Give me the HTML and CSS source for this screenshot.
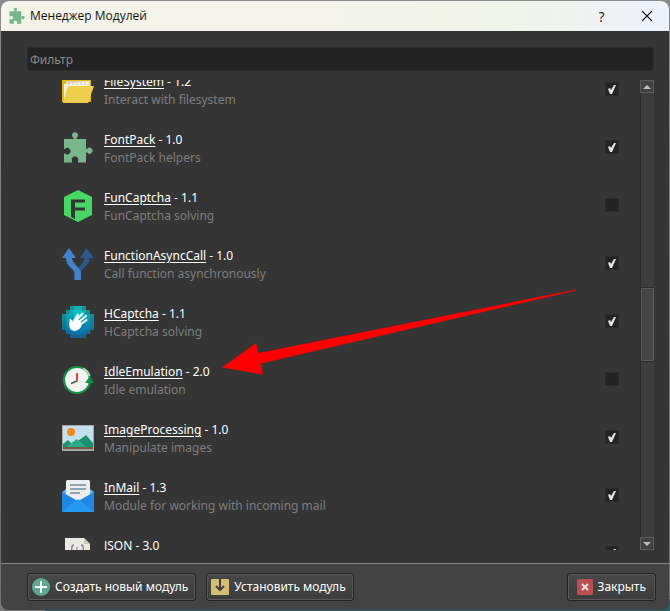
FILE: index.html
```html
<!DOCTYPE html>
<html lang="ru">
<head>
<meta charset="utf-8">
<title>Менеджер Модулей</title>
<link rel="stylesheet" href="styles.css">
</head>
<body>
<div class="window">
  <header class="titlebar">
    <svg class="app-icon" viewBox="1 1 30 30"><use href="#puzzle"/></svg>
    <h1 class="title">Менеджер Модулей</h1>
    <button class="caption-button" type="button" aria-label="Справка">?</button>
    <button class="caption-button" type="button" aria-label="Закрыть окно"><svg width="12" height="12" viewBox="0 0 12 12"><path d="M1 1L11 11M11 1L1 11" stroke="#1b1b1b" stroke-width="1.1"/></svg></button>
  </header>
  <main class="content">
    <input class="filter" type="text" placeholder="Фильтр" aria-label="Фильтр">
    <div class="viewport">
      <ul class="modules">
        <li class="module">
          <svg class="icon" viewBox="0 0 32 32"><path d="M0 3H12L14 6H29V28H0Z" fill="#eab413"/><path d="M4 7H28V24H4Z" fill="#d9d3c0"/><path d="M2 10L27 7V26H2Z" fill="#f6f0e1"/><path d="M7 9V11M11 9V11M15 8V11M19 8V11M23 8V11" stroke="#d2cab5"/><path d="M5 14Q6 12 8 12H32L26 29H1Z" fill="#eecf4b"/></svg>
          <div class="text"><p class="name"><a href="#filesystem">FileSystem</a> - 1.2</p><p class="desc">Interact with filesystem</p></div>
          <input class="check" type="checkbox" aria-label="FileSystem" checked>
        </li>
        <li class="module">
          <svg class="icon" viewBox="0 0 32 32"><g id="puzzle"><path d="M2 7H11.500V5.800A3 3 0 1 1 14.500 5.800V7H24V17H25A3 3 0 1 1 25 20.500H24V30.500H16V29A3.300 3.300 0 1 0 10 29V30.500H2V21.500H3A3.200 3.200 0 1 0 3 17H2Z" fill="#77b78a"/></g></svg>
          <div class="text"><p class="name"><a href="#fontpack">FontPack</a> - 1.0</p><p class="desc">FontPack helpers</p></div>
          <input class="check" type="checkbox" aria-label="FontPack" checked>
        </li>
        <li class="module">
          <svg class="icon" viewBox="0 0 32 32"><path d="M16 0L30 7V25L16 32L2 25V7Z" fill="#47d764"/><path d="M9 9.500H23V12.500H13V17.500H23V20.500H13V29L9 27Z" fill="#353535"/></svg>
          <div class="text"><p class="name"><a href="#funcaptcha">FunCaptcha</a> - 1.1</p><p class="desc">FunCaptcha solving</p></div>
          <input class="check" type="checkbox" aria-label="FunCaptcha">
        </li>
        <li class="module">
          <svg class="icon" viewBox="0 0 32 32"><path d="M24.500 0L32 10H28C28 18 19 19 19 26V32H16V20C19 16 22 15 22 10H18Z" fill="#29598a"/><path d="M7 0L14 10H10C10 16 19 19 19 26V32H12.500V26C12.500 20 4 19 4 10H0Z" fill="#4284cb"/></svg>
          <div class="text"><p class="name"><a href="#functionasynccall">FunctionAsyncCall</a> - 1.0</p><p class="desc">Call function asynchronously</p></div>
          <input class="check" type="checkbox" aria-label="FunctionAsyncCall" checked>
        </li>
        <li class="module">
          <svg class="icon" viewBox="0 0 32 32"><defs><linearGradient id="aqua" x1="0" y1="0" x2="0" y2="1"><stop offset="0" stop-color="#14b5ad"/><stop offset=".5" stop-color="#079bb4"/><stop offset="1" stop-color="#0b6eb2"/></linearGradient></defs><path d="M8 0H24V4H28V8H32V24H28V28H24V32H8V28H4V24H0V8H4V4H8Z" fill="url(#aqua)" opacity=".75"/><path d="M12 0H20V4H24V8H28V24H24V28H8V24H4V8H8V4H12Z" fill="url(#aqua)"/><path d="M12 4H20V8H24V12H12Z" fill="#04c5c1"/><path d="M8.500 20L8.500 14L10.500 17L16 8.500M11 18L20.500 7.500M13 19L24 10M15 21L24.500 14" fill="none" stroke="#fff" stroke-width="2" stroke-linecap="round" stroke-linejoin="round"/><path d="M7.500 16L12 16L16 13L20 17L19 21Q16 25 12 25Q7.500 24 7.500 20Z" fill="#fff"/></svg>
          <div class="text"><p class="name"><a href="#hcaptcha">HCaptcha</a> - 1.1</p><p class="desc">HCaptcha solving</p></div>
          <input class="check" type="checkbox" aria-label="HCaptcha" checked>
        </li>
        <li class="module">
          <svg class="icon" viewBox="0 0 32 32"><circle cx="15" cy="16" r="13" fill="#f3f3f1" stroke="#129347" stroke-width="2.200"/><path d="M21 4.500A13 13 0 0 1 27.500 12" fill="none" stroke="#a9d7b9" stroke-width="2.200"/><path d="M23 19L27.500 12.500L32 19Z" fill="#129347"/><path d="M15 9V17" stroke="#dc4a2c" stroke-width="2"/><path d="M9 19.500L15 17" stroke="#555" stroke-width="1.600"/></svg>
          <div class="text"><p class="name"><a href="#idleemulation">IdleEmulation</a> - 2.0</p><p class="desc">Idle emulation</p></div>
          <input class="check" type="checkbox" aria-label="IdleEmulation">
        </li>
        <li class="module">
          <svg class="icon" viewBox="0 0 32 32"><path d="M0 3H32V29H0Z" fill="#a5a5a3"/><path d="M1 4H31V26H1Z" fill="#c3e0ec"/><circle cx="9" cy="10" r="4" fill="#f28b1c"/><path d="M1 25V22L6 18L10 22L16 19L24 13L31 21V25Z" fill="#1c9170"/><path d="M4 25L15 17L24 25Z" fill="#28ae87"/><path d="M1 25H31V27H1Z" fill="#795646"/></svg>
          <div class="text"><p class="name"><a href="#imageprocessing">ImageProcessing</a> - 1.0</p><p class="desc">Manipulate images</p></div>
          <input class="check" type="checkbox" aria-label="ImageProcessing" checked>
        </li>
        <li class="module">
          <svg class="icon" viewBox="0 0 32 32"><path d="M0 12L4 9H28L32 12V32H0Z" fill="#64b0ef"/><path d="M4 1.500Q4 0 5.500 0H26.500Q28 0 28 1.500V26H4Z" fill="#eceff1"/><path d="M8 5H24M8 9H24M8 13H18" stroke="#8fa4af" stroke-width="2"/><path d="M0 12L14 20H18L32 12V32H0Z" fill="#1f88e3"/><path d="M0 32L14 20Q16 19 18 20L32 32Z" fill="#2499f3"/></svg>
          <div class="text"><p class="name"><a href="#inmail">InMail</a> - 1.3</p><p class="desc">Module for working with incoming mail</p></div>
          <input class="check" type="checkbox" aria-label="InMail" checked>
        </li>
        <li class="module">
          <svg class="icon" viewBox="0 0 32 32"><path d="M3 0H22L28 6V32H3Z" fill="#e9e9e0"/><path d="M22 0L28 6H22Z" fill="#c9c8bd"/><path d="M12 7Q10 7 10 9Q10 11 9 11Q10 11 10 13M19 7Q21 7 21 9Q21 11 22 11Q21 11 21 13M15 9.500V11.500" fill="none" stroke="#9777a8" stroke-width="1.500"/></svg>
          <div class="text"><p class="name">JSON - 3.0</p><p class="desc">JSON helpers</p></div>
          <input class="check" type="checkbox" aria-label="JSON" checked>
        </li>
      </ul>
      <div class="scrollbar">
        <button class="step" type="button" aria-label="Вверх"><svg width="8" height="4" viewBox="0 0 8 4"><path d="M0 4L4 0L8 4Z" fill="#bdbdbd"/></svg></button>
        <div class="track"><div class="thumb"></div></div>
        <button class="step" type="button" aria-label="Вниз"><svg width="8" height="4" viewBox="0 0 8 4"><path d="M0 0H8L4 4Z" fill="#bdbdbd"/></svg></button>
      </div>
    </div>
  </main>
  <footer class="footer">
    <button class="button" type="button"><svg width="18" height="18" viewBox="0 0 18 18"><circle cx="9" cy="9" r="9" fill="#5fa890"/><path d="M9 3V15M3 9H15" stroke="#fff" stroke-width="2"/></svg>Создать новый модуль</button>
    <button class="button" type="button"><svg width="18" height="18" viewBox="0 0 18 18"><path d="M1 1H17Q18 1 18 2V16Q18 17 17 17H1Q0 17 0 16V2Q0 1 1 1Z" fill="#d4be72"/><path d="M9 1V12M5 8L9 12L13 8" fill="none" stroke="#404040" stroke-width="2"/></svg>Установить модуль</button>
    <button class="button button-close" type="button"><svg width="16" height="16" viewBox="0 0 16 16"><rect width="16" height="16" rx="1" fill="#b94f50"/><path d="M5 5L11 11M11 5L5 11" stroke="#f4dede" stroke-width="2"/></svg>Закрыть</button>
  </footer>
  <svg class="arrow" width="356" height="88" viewBox="0 0 356 88"><path d="M0 78.500L34 54L36.500 64L354 .500V1.500L39 74.500L41 85.500Z" fill="#f00"/></svg>
</div>
</body>
</html>
```
FILE: styles.css
```css
* {
  box-sizing: border-box;
}

body {
  margin: 0;
  height: 100vh;
  padding: 1px;
  background: linear-gradient(90deg, #777 45px, #286068 45px) bottom / 100% 12px no-repeat, linear-gradient(#8b8b8b, #6d6d6d);
  font-family: "Noto Sans", sans-serif;
  font-size: 12px;
  line-height: 18px;
}

.window {
  position: relative;
  display: flex;
  flex-direction: column;
  height: 100%;
  overflow: hidden;
  border-radius: 8px;
  background: #353535;
  color: #fff;
}

.titlebar {
  display: flex;
  flex: none;
  align-items: center;
  height: 30px;
  padding-left: 8px;
  background: linear-gradient(90deg, #f4f4ea 50%, #f1f4e8 75%, #edf1fb);
  color: #111;
  font-family: "Open Sans", sans-serif;
}

.app-icon {
  width: 16px;
  height: 16px;
}

.title {
  flex: 1;
  margin: 0 0 0 5px;
  font-size: 12px;
  font-weight: 400;
}

.caption-button {
  display: flex;
  align-items: center;
  justify-content: center;
  width: 45px;
  height: 30px;
  padding: 0;
  border: 0;
  background: none;
  color: #111;
  font: 14px "Open Sans", sans-serif;
}

.content {
  display: flex;
  flex: 1;
  flex-direction: column;
  gap: 9px;
  min-height: 0;
  padding: 16px 15px 13px 26px;
}

.filter {
  flex: none;
  height: 24px;
  padding: 0 2px;
  border: 1px solid #2b2b2b;
  border-radius: 3px;
  background: #232323;
  color: #fff;
  font: inherit;
}

.filter::placeholder {
  color: #8a8a8a;
  opacity: 1;
}

.viewport {
  display: flex;
  flex: 1;
  min-height: 0;
  overflow: hidden;
}

.modules {
  flex: 1;
  margin: -18px 0 0;
  padding: 0 21px 0 35px;
  list-style: none;
}

.module {
  display: flex;
  align-items: center;
  height: 58px;
}

.icon {
  width: 32px;
  height: 32px;
  margin-bottom: 2px;
}

.text {
  flex: 1;
  margin-left: 10px;
}

.text p {
  margin: 0;
}

.name a {
  color: inherit;
  text-underline-offset: 2px;
}

.desc {
  color: #7d7d7d;
}

.check {
  appearance: none;
  width: 14px;
  height: 14px;
  margin: 0 0 4px;
  border: 1px solid #2b2b2b;
  background: #232323;
}

.check:checked::before {
  content: "";
  display: block;
  width: 12px;
  height: 12px;
  background: #e4e4e4;
  clip-path: polygon(2px 6px, 4px 5px, 5px 7px, 8px 2px, 10px 2px, 6px 11px, 4px 11px);
}

.scrollbar {
  display: flex;
  flex-direction: column;
  width: 14px;
}

.step {
  display: flex;
  flex: none;
  align-items: center;
  justify-content: center;
  height: 13px;
  padding: 0;
  border: 1px solid #5c5c5c;
  background: #414141;
}

.track {
  flex: 1;
  padding-top: 195px;
  border-left: 1px solid #2a2a2a;
  background: #3d3d3d;
}

.thumb {
  height: 73px;
  border: 1px solid #5c5c5c;
  outline: 1px solid #2a2a2a;
  background: linear-gradient(90deg, #424242, #484848);
}

.footer {
  display: flex;
  flex: none;
  gap: 10px;
  padding: 9px 13px 9px 26px;
  border-top: 1px solid #858585;
  background: #434343;
}

.button {
  display: flex;
  align-items: center;
  gap: 5px;
  height: 28px;
  padding: 0 7px 0 4px;
  border: 1px solid #222;
  border-radius: 3px;
  background: linear-gradient(#484848, #3c3c3c);
  box-shadow: inset 0 0 0 1px #5a5a5a;
  color: #fff;
  font: inherit;
}

.button-close {
  margin-left: auto;
  padding: 0 9px;
}

.arrow {
  position: absolute;
  top: 288px;
  left: 221px;
  pointer-events: none;
}
```
